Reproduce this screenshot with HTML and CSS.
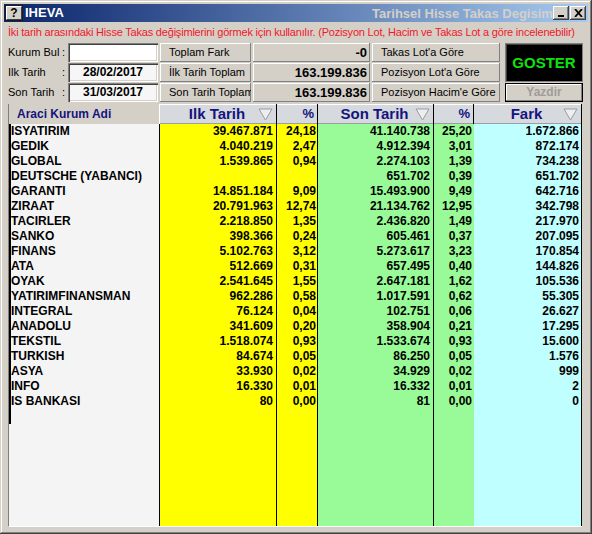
FILE: index.html
```html
<!DOCTYPE html>
<html>
<head>
<meta charset="utf-8">
<link rel="stylesheet" href="styles.css">
</head>
<body>
<div class="window">
  <div class="titlebar">
    <span class="appicon">?</span>
    <span class="apptitle">IHEVA</span>
    <span class="spacer"></span>
    <span class="caption-clip"><span class="caption">Tarihsel Hisse Takas Degisimleri</span></span>
    <span class="tbtn"><svg width="8" height="8" viewBox="0 0 8 8"><rect x="1" y="6" width="6" height="2" fill="#000"/></svg></span>
    <span class="tbtn tbtn-close"><svg width="9" height="8" viewBox="0 0 9 8"><path d="M1 0 L8 8 M8 0 L1 8" stroke="#000" stroke-width="1.8"/></svg></span>
  </div>
  <div class="content">
    <div class="notice">İki tarih arasındaki Hisse Takas değişimlerini görmek için kullanılır. (Pozisyon Lot, Hacim ve Takas Lot a göre incelenebilir)</div>
    <div class="form">
      <div class="label"><span>Kurum Bul</span><span>:</span></div>
      <div class="input"></div>
      <div class="btn">Toplam Fark</div>
      <div class="value">-0</div>
      <div class="btn">Takas Lot'a Göre</div>
      <div class="goster">GOSTER</div>

      <div class="label"><span>Ilk Tarih</span><span>:</span></div>
      <div class="input date">28/02/2017</div>
      <div class="btn">İlk Tarih Toplam</div>
      <div class="value">163.199.836</div>
      <div class="btn">Pozisyon Lot'a Göre</div>

      <div class="label"><span>Son Tarih</span><span>:</span></div>
      <div class="input date">31/03/2017</div>
      <div class="btn clip">Son Tarih Toplam</div>
      <div class="value">163.199.836</div>
      <div class="btn">Pozisyon Hacim'e Göre</div>
      <div class="yazdir">Yazdir</div>
    </div>
    <div class="table">
      <div class="h h-name">Araci Kurum Adi</div>
      <div class="h h-col"><span class="h-pad"></span><span class="h-text">Ilk Tarih</span><svg class="tri" width="15" height="13" viewBox="0 0 15 13"><path d="M1 1 H14 L7.5 12 Z" fill="#eceef0" stroke="#9a9ca0" stroke-width="1"/></svg></div>
      <div class="h h-pct">%</div>
      <div class="h h-col"><span class="h-pad"></span><span class="h-text">Son Tarih</span><svg class="tri" width="15" height="13" viewBox="0 0 15 13"><path d="M1 1 H14 L7.5 12 Z" fill="#eceef0" stroke="#9a9ca0" stroke-width="1"/></svg></div>
      <div class="h h-pct">%</div>
      <div class="h h-col h-last"><span class="h-pad"></span><span class="h-text">Fark</span><svg class="tri" width="15" height="13" viewBox="0 0 15 13"><path d="M1 1 H14 L7.5 12 Z" fill="#eceef0" stroke="#9a9ca0" stroke-width="1"/></svg></div>

      <div class="c n">ISYATIRIM</div><div class="c y">39.467.871</div><div class="c yp">24,18</div><div class="c g">41.140.738</div><div class="c gp">25,20</div><div class="c f">1.672.866</div>
      <div class="c n">GEDIK</div><div class="c y">4.040.219</div><div class="c yp">2,47</div><div class="c g">4.912.394</div><div class="c gp">3,01</div><div class="c f">872.174</div>
      <div class="c n">GLOBAL</div><div class="c y">1.539.865</div><div class="c yp">0,94</div><div class="c g">2.274.103</div><div class="c gp">1,39</div><div class="c f">734.238</div>
      <div class="c n">DEUTSCHE (YABANCI)</div><div class="c y"></div><div class="c yp"></div><div class="c g">651.702</div><div class="c gp">0,39</div><div class="c f">651.702</div>
      <div class="c n">GARANTI</div><div class="c y">14.851.184</div><div class="c yp">9,09</div><div class="c g">15.493.900</div><div class="c gp">9,49</div><div class="c f">642.716</div>
      <div class="c n">ZIRAAT</div><div class="c y">20.791.963</div><div class="c yp">12,74</div><div class="c g">21.134.762</div><div class="c gp">12,95</div><div class="c f">342.798</div>
      <div class="c n">TACIRLER</div><div class="c y">2.218.850</div><div class="c yp">1,35</div><div class="c g">2.436.820</div><div class="c gp">1,49</div><div class="c f">217.970</div>
      <div class="c n">SANKO</div><div class="c y">398.366</div><div class="c yp">0,24</div><div class="c g">605.461</div><div class="c gp">0,37</div><div class="c f">207.095</div>
      <div class="c n">FINANS</div><div class="c y">5.102.763</div><div class="c yp">3,12</div><div class="c g">5.273.617</div><div class="c gp">3,23</div><div class="c f">170.854</div>
      <div class="c n">ATA</div><div class="c y">512.669</div><div class="c yp">0,31</div><div class="c g">657.495</div><div class="c gp">0,40</div><div class="c f">144.826</div>
      <div class="c n">OYAK</div><div class="c y">2.541.645</div><div class="c yp">1,55</div><div class="c g">2.647.181</div><div class="c gp">1,62</div><div class="c f">105.536</div>
      <div class="c n">YATIRIMFINANSMAN</div><div class="c y">962.286</div><div class="c yp">0,58</div><div class="c g">1.017.591</div><div class="c gp">0,62</div><div class="c f">55.305</div>
      <div class="c n">INTEGRAL</div><div class="c y">76.124</div><div class="c yp">0,04</div><div class="c g">102.751</div><div class="c gp">0,06</div><div class="c f">26.627</div>
      <div class="c n">ANADOLU</div><div class="c y">341.609</div><div class="c yp">0,20</div><div class="c g">358.904</div><div class="c gp">0,21</div><div class="c f">17.295</div>
      <div class="c n">TEKSTIL</div><div class="c y">1.518.074</div><div class="c yp">0,93</div><div class="c g">1.533.674</div><div class="c gp">0,93</div><div class="c f">15.600</div>
      <div class="c n">TURKISH</div><div class="c y">84.674</div><div class="c yp">0,05</div><div class="c g">86.250</div><div class="c gp">0,05</div><div class="c f">1.576</div>
      <div class="c n">ASYA</div><div class="c y">33.930</div><div class="c yp">0,02</div><div class="c g">34.929</div><div class="c gp">0,02</div><div class="c f">999</div>
      <div class="c n">INFO</div><div class="c y">16.330</div><div class="c yp">0,01</div><div class="c g">16.332</div><div class="c gp">0,01</div><div class="c f">2</div>
      <div class="c n">IS BANKASI</div><div class="c y">80</div><div class="c yp">0,00</div><div class="c g">81</div><div class="c gp">0,00</div><div class="c f">0</div>
      <div class="c n"></div><div class="c y"></div><div class="c yp"></div><div class="c g"></div><div class="c gp"></div><div class="c f"></div>

      <div class="c n fill"></div><div class="c y"></div><div class="c yp"></div><div class="c g"></div><div class="c gp"></div><div class="c f"></div>
    </div>
  </div>
</div>
</body>
</html>
```

FILE: styles.css
```css
* { box-sizing: border-box; }
html, body { margin: 0; padding: 0; }
body { width: 592px; height: 534px; overflow: hidden; background: #d4d0c8; font-family: "Liberation Sans", Arial, sans-serif; }

.window {
  width: 592px; height: 534px;
  background: #d4d0c8;
  padding: 4px;
  display: flex; flex-direction: column;
  box-shadow: inset -1px -1px #404040, inset 1px 1px #d4d0c8, inset -2px -2px #808080, inset 2px 2px #ffffff;
}

.titlebar {
  height: 18px; flex: none;
  display: flex; align-items: center;
  background: linear-gradient(to right, #0a246a, #a6caf0);
  padding: 0 2px 0 2px;
}
.appicon {
  width: 16px; height: 14px;
  background: #d4d0c8;
  border: 1px solid #404040;
  border-top-color: #ffffff; border-left-color: #ffffff;
  box-shadow: 0 0 0 1px #1a1a1a;
  font: bold 12px/12px "Liberation Sans", Arial, sans-serif;
  color: #000; text-align: center;
}
.apptitle { color: #fff; font: bold 13px/18px "Liberation Sans", Arial, sans-serif; margin-left: 3px; }
.spacer { flex: 1; }
.caption-clip { width: 181px; overflow: hidden; white-space: nowrap; height: 18px; }
.caption { color: #d4d0c8; font: bold 13px/18px "Liberation Sans", Arial, sans-serif; }
.tbtn {
  width: 16px; height: 14px; flex: none;
  background: #d4d0c8;
  display: flex; align-items: center; justify-content: center;
  box-shadow: inset -1px -1px #404040, inset 1px 1px #ffffff, inset -2px -2px #808080;
}
.tbtn-close { margin-left: 1px; }

.content { flex: 1; display: flex; flex-direction: column; padding: 0 5px 3px 4px; min-height: 0; }

.notice {
  margin-top: 3px; height: 14px;
  color: #f01828; font-size: 11px; line-height: 14px; white-space: nowrap; letter-spacing: -0.2px;
}

.form {
  margin-top: 4px;
  display: grid;
  grid-template-columns: 58px 90px 91px 117px 128px 81px;
  grid-template-rows: 19px 19px 19px;
  gap: 1px 2px;
}
.label { display: flex; justify-content: space-between; padding-right: 1px; font-size: 11px; line-height: 19px; color: #000; white-space: nowrap; }
.input {
  background: #ffffff;
  box-shadow: inset 1px 1px #808080, inset 2px 2px #404040, inset -1px -1px #ffffff, inset -2px -2px #d4d0c8;
  font: bold 12px/19px "Liberation Sans", Arial, sans-serif; text-align: center; color: #000;
}
.input.date { background: #f6f6f6; }
.btn {
  background: #d4d0c8;
  box-shadow: inset -1px -1px #808080, inset 1px 1px #ffffff;
  font-size: 11px; line-height: 19px; padding-left: 9px; color: #000; white-space: nowrap; overflow: hidden;
}
.value {
  background: #d4d0c8;
  box-shadow: inset -1px -1px #808080, inset 1px 1px #ffffff;
  font: bold 13px/19px "Liberation Sans", Arial, sans-serif; text-align: right; padding-right: 3px; color: #000;
}
.goster {
  grid-row: 1 / 3; grid-column: 6;
  margin-left: 3px;
  background: #000;
  border: 1px solid #808080;
  box-shadow: inset 1px 1px #404040, 0 0 0 1px #d4d0c8;
  color: #10e010; font: bold 15px/37px "Liberation Sans", Arial, sans-serif; text-align: center;
}
.yazdir {
  grid-row: 3; grid-column: 6;
  margin-left: 3px;
  background: #d4d0c8;
  border: 1px solid #000;
  box-shadow: inset -1px -1px #808080, inset 1px 1px #ffffff;
  color: #a09c98; font: bold 12px/17px "Liberation Sans", Arial, sans-serif; text-align: center;
}

.table {
  margin-top: 2px;
  flex: 1; min-height: 0;
  display: grid;
  grid-template-columns: 151px 117px 41px 116px 40px 108px;
  grid-template-rows: 20px repeat(20, 15px) 1fr;
  border-left: 1px solid #808080;
  border-bottom: 1px solid #ffffff;
  width: 574px;
}
.h { font: bold 12px/20px "Liberation Sans", Arial, sans-serif; color: #14147e; }
.h-name { background: #d4d0c8; padding-left: 8px; border-right: 1px solid #ffffff; }
.h-col, .h-pct {
  background: #d6d9de;
  border-right: 1px solid #000;
  box-shadow: inset 0 1px #ffffff, inset 0 -1px #9c9ea4;
}
.h-col { display: flex; align-items: center; }
.h-pad { width: 16px; flex: none; }
.h-text { flex: 1; text-align: center; font-size: 15px; line-height: 20px; }
.tri { flex: none; margin-right: 3px; }
.h-pct { text-align: right; padding-right: 3px; font-size: 13px; }
.h-last { border-right: 1px solid #000; }

.c {
  font: bold 12px/15px "Liberation Sans", Arial, sans-serif; color: #000;
  white-space: nowrap; overflow: hidden;
}
.n { background: #f4f4f4; border-left: 2px solid #000; padding-left: 0; border-right: 1px solid #000; }
.n.fill { border-left: 0; }
.y { background: #ffff00; text-align: right; padding-right: 3px; border-right: 1px solid #000; }
.yp { background: #ffff00; text-align: right; padding-right: 1px; border-right: 1px solid #000; }
.g { background: #98fb98; text-align: right; padding-right: 3px; border-right: 1px solid #000; }
.gp { background: #98fb98; text-align: right; padding-right: 2px; }
.f { background: #c0ffff; text-align: right; padding-right: 2px; border-right: 1px solid #000; }
```
